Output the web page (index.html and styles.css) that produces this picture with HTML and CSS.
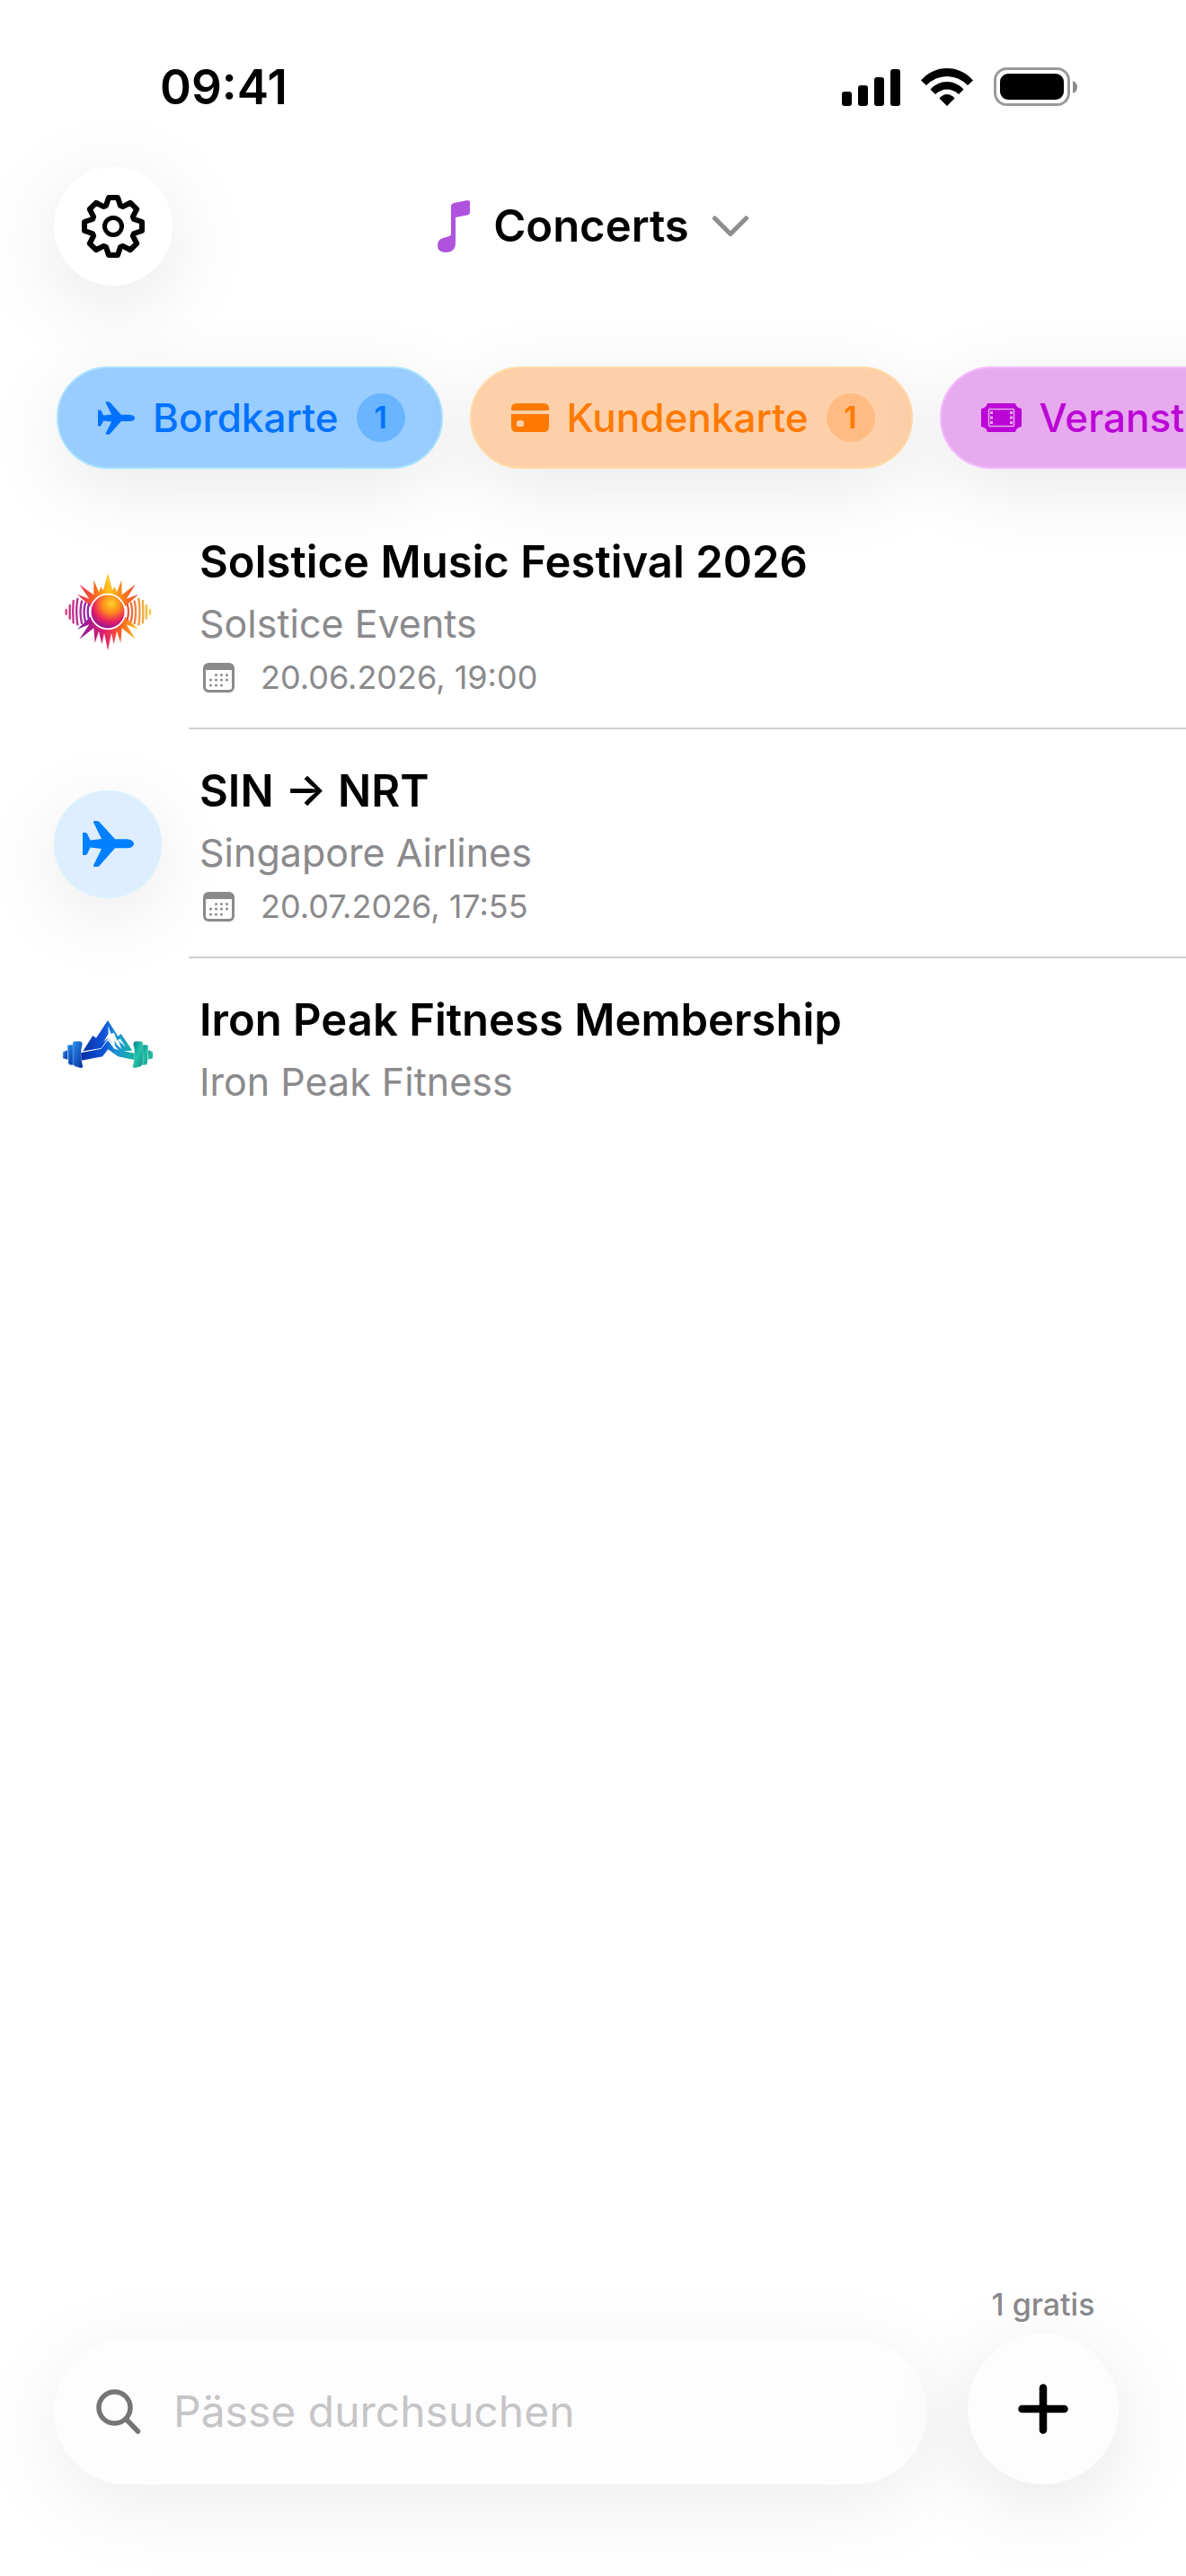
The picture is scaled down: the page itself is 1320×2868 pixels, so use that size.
FILE: index.html
```html
<!DOCTYPE html>
<html lang="de">
<head>
	<meta charset="UTF-8">
	<meta name="viewport" content="width=device-width, initial-scale=1">
	<title>Concerts</title>
	<link rel="stylesheet" href="styles.css">
</head>
<body>
	<!-- shared symbols -->
	<svg class="defs" aria-hidden="true">
		<symbol id="plane" viewBox="0 0 57 51">
			<path fill="currentColor" d="M0 13H3Q4 13 5 14L8.500 21.500 21 20 12 1.500Q12 0 13 0H16Q18 0 19 1.500L36 20.300H49C54 20.500 57 23 57 25.500S54 30.300 49 30.300H36L19 49.500Q18 51 16 51H13Q12 51 12 49.500L21 31 8.500 29.500 5 37Q4 38 3 38H0Z"/>
		</symbol>
		<symbol id="calendar" viewBox="0 0 35 33">
			<rect x="1.500" y="1.500" width="32" height="30" rx="4.500" fill="none" stroke="currentColor" stroke-width="3"/>
			<path fill="currentColor" d="M1 8V5Q1 1 5 1H30Q34 1 34 5V8Z"/>
			<g fill="currentColor">
				<circle cx="14.500" cy="13.500" r="1.500"/><circle cx="20.500" cy="13.500" r="1.500"/><circle cx="26.500" cy="13.500" r="1.500"/>
				<circle cx="8.500" cy="19" r="1.500"/><circle cx="14.500" cy="19" r="1.500"/><circle cx="20.500" cy="19" r="1.500"/><circle cx="26.500" cy="19" r="1.500"/>
				<circle cx="8.500" cy="25" r="1.500"/><circle cx="14.500" cy="25" r="1.500"/><circle cx="20.500" cy="25" r="1.500"/>
			</g>
		</symbol>
	</svg>

	<div class="status">
		<span class="time">09:41</span>
		<div class="status-icons">
			<svg width="65" height="42" viewBox="0 0 65 42">
				<rect x="0" y="26" width="11" height="16" rx="3"/>
				<rect x="18" y="19" width="11" height="23" rx="3"/>
				<rect x="36" y="10" width="11" height="32" rx="3"/>
				<rect x="54" y="1" width="11" height="41" rx="3"/>
			</svg>
			<svg width="58" height="42" viewBox="0 0 58 42">
				<path d="M0 13.500Q12 0 29 0T58 13.500L52 19Q42 9 29 9T6 19Z"/>
				<path d="M10.500 23.500Q18 15 29 15T47.500 23.500L42 29Q36 23.500 29 23.500T16 29Z"/>
				<path d="M20.500 33.500Q24 29 29 29T37.500 33.500L29 42Z"/>
			</svg>
			<svg width="94" height="44" viewBox="0 0 94 44">
				<rect x="1.500" y="1.500" width="82" height="40" rx="13" fill="none" stroke="#999" stroke-width="3"/>
				<rect x="7" y="7" width="71" height="29" rx="9"/>
				<path d="M88 15Q93 17 93 22T88 29Z" fill="#8c8c8c"/>
			</svg>
		</div>
	</div>

	<header class="nav">
		<button class="round settings" type="button" aria-label="Einstellungen">
			<svg width="70" height="70" viewBox="-35 -35 70 70" fill="none" stroke="#000" stroke-width="6" stroke-linejoin="round">
				<path d="M-5-32H5L8-23 10.600-21.900 19.100-26.200 26.200-19.100 21.900-10.600 23-8 32-5V5L23 8 21.900 10.600 26.200 19.100 19.100 26.200 10.600 21.900 8 23 5 32H-5L-8 23-10.600 21.900-19.100 26.200-26.200 19.100-21.900 10.600-23 8-32 5V-5L-23-8-21.900-10.600-26.200-19.100-19.100-26.200-10.600-21.900-8-23Z"/>
				<circle r="9.500" stroke-width="5"/>
			</svg>
		</button>
		<button class="title" type="button">
			<svg width="36" height="58" viewBox="0 0 36 58">
				<path fill="#af52de" d="M15 7Q15 4 18 3L33 0Q36 0 36 2V13Q36 16 33 16.500L20 19V47Q20 58 9 58 0 58 0 50 0 44 6 42L13 40Q15 39 15 37Z"/>
			</svg>
			<span>Concerts</span>
			<svg width="40" height="24" viewBox="0 0 40 24">
				<path d="M2.500 3L20 20.500 37.500 3" fill="none" stroke="#8e8e8e" stroke-width="5" stroke-linecap="round" stroke-linejoin="round"/>
			</svg>
		</button>
	</header>

	<nav class="chips">
		<button class="chip blue" type="button">
			<svg width="41" height="37"><use href="#plane"/></svg>
			<span>Bordkarte</span>
			<span class="badge">1</span>
		</button>
		<button class="chip orange" type="button">
			<svg width="42" height="32" viewBox="0 0 42 32" fill="currentColor">
				<path d="M0 8V6Q0 0 6 0H36Q42 0 42 6V8Z"/>
				<path fill-rule="evenodd" d="M0 12H42V26Q42 32 36 32H6Q0 32 0 26ZM8 19Q6 19 6 21V24Q6 26 8 26H12Q14 26 14 24V21Q14 19 12 19Z"/>
			</svg>
			<span>Kundenkarte</span>
			<span class="badge">1</span>
		</button>
		<button class="chip purple" type="button">
			<svg width="45" height="32" viewBox="0 0 45 32">
				<path fill="currentColor" d="M7 0H38Q39 5 45 6V26Q39 27 38 32H7Q6 27 0 26V6Q6 5 7 0Z"/>
				<rect x="8.500" y="6.500" width="28" height="19" rx="1" fill="none" stroke="#e8aaef" stroke-width="1.500"/>
				<path d="M11.500 9V24M33.500 9V24" stroke="#e8aaef" stroke-width="3" stroke-dasharray="3 2.500" fill="none"/>
			</svg>
			<span>Veranstaltung</span>
		</button>
	</nav>

	<main>
		<ul class="list">
			<li class="row">
				<div class="logo">
					<svg width="120" height="100" viewBox="0 0 360 300">
						<defs>
							<linearGradient id="rayTop" gradientUnits="userSpaceOnUse" x1="80" y1="100" x2="280" y2="80">
								<stop offset="0" stop-color="#e8265c"/><stop offset=".3" stop-color="#fb6a1c"/><stop offset=".52" stop-color="#ffc81e"/><stop offset=".75" stop-color="#fc7d1c"/><stop offset="1" stop-color="#f0402c"/>
							</linearGradient>
							<linearGradient id="rayBottom" gradientUnits="userSpaceOnUse" x1="80" y1="220" x2="280" y2="220">
								<stop offset="0" stop-color="#7d1a9c"/><stop offset=".45" stop-color="#e31e6c"/><stop offset=".75" stop-color="#fb6a1c"/><stop offset="1" stop-color="#ffc81e"/>
							</linearGradient>
							<linearGradient id="wave" gradientUnits="userSpaceOnUse" x1="38" y1="120" x2="324" y2="120">
								<stop offset="0" stop-color="#e0357c"/><stop offset=".28" stop-color="#8a24b0"/><stop offset=".7" stop-color="#f04c3c"/><stop offset="1" stop-color="#f7d23c"/>
							</linearGradient>
							<radialGradient id="ball" cx=".6" cy=".27" r=".75">
								<stop offset="0" stop-color="#ffd42a"/><stop offset=".35" stop-color="#fd8a1c"/><stop offset=".7" stop-color="#e81e62"/><stop offset="1" stop-color="#84189c"/>
							</radialGradient>
						</defs>
						<path fill="url(#rayTop)" d="M122 135L78 95 118 110 85 62 133 97 133 47 150 88 157 70 165 82 180 25 195 82 203 70 210 88 226 47 227 97 272 62 242 110 282 95 238 135Z"/>
						<path fill="url(#rayBottom)" d="M122 170L78 212 118 196 85 245 133 208 137 258 150 218 160 262 168 224 180 283 192 224 200 262 210 218 223 258 227 208 272 245 242 196 282 212 238 170Z"/>
						<path fill="none" stroke="url(#wave)" stroke-width="7" stroke-linecap="round" d="M41 147V161M53 132V176M65 117Q62 154 65 190M79 110Q72 152 79 196M93 118Q84 152 93 192M105 124Q96 152 105 186M117 128Q109 152 117 180M321 147V161M309 132V176M297 117Q300 154 297 190M283 110Q290 152 283 196M269 118Q278 152 269 192M257 124Q266 152 257 186M245 128Q253 152 245 180"/>
						<circle cx="180" cy="153" r="58" fill="url(#ball)" stroke="#fff" stroke-width="5"/>
					</svg>
				</div>
				<div class="info">
					<h2>Solstice Music Festival 2026</h2>
					<p class="org">Solstice Events</p>
					<p class="date"><svg width="35" height="33"><use href="#calendar"/></svg>20.06.2026, 19:00</p>
				</div>
			</li>
			<li class="row">
				<div class="logo circle">
					<svg width="57" height="51"><use href="#plane"/></svg>
				</div>
				<div class="info">
					<h2>SIN → NRT</h2>
					<p class="org">Singapore Airlines</p>
					<p class="date"><svg width="35" height="33"><use href="#calendar"/></svg>20.07.2026, 17:55</p>
				</div>
			</li>
			<li class="row">
				<div class="logo">
					<svg width="120" height="80" viewBox="0 0 360 240">
						<defs>
							<linearGradient id="peak" gradientUnits="userSpaceOnUse" x1="95" y1="120" x2="265" y2="120">
								<stop offset="0" stop-color="#0a2fa8"/><stop offset=".45" stop-color="#0f56dc"/><stop offset=".65" stop-color="#1a90d8"/><stop offset="1" stop-color="#16b3a2"/>
							</linearGradient>
							<linearGradient id="plateL" x1="0" y1="0" x2="1" y2="1">
								<stop offset="0" stop-color="#2a93ee"/><stop offset="1" stop-color="#082a9c"/>
							</linearGradient>
							<linearGradient id="plateR" x1="0" y1="0" x2="1" y2="1">
								<stop offset="0" stop-color="#0d7898"/><stop offset=".5" stop-color="#22c4a4"/><stop offset="1" stop-color="#128a90"/>
							</linearGradient>
						</defs>
						<path fill="url(#peak)" d="M97 142L130 90 141 98 180 39 214 92 224 84 262 140 220 142 180 100 158 132Z"/>
						<path fill="#fff" d="M181 58L191 84 200 80 212 107 221 100 240 128 216 107 226 136 210 120 202 106 204 126 180 98 166 110 182 84Z"/>
						<path fill="url(#peak)" d="M88 148L158 134 180 106 202 134 272 150V172L214 160 181 136 162 160 88 174Z"/>
						<g fill="url(#plateL)" stroke="#cfe6ff" stroke-width="1">
							<path d="M30 144L46 138V170L30 166Z"/>
							<path d="M45 125Q46 121 52 121H66V188H56Q50 188 48 182Z"/>
							<path d="M63 113Q65 109 72 109H88Q98 112 94 124 86 152 97 194 96 199 88 198L70 193Q62 188 63 180Z"/>
						</g>
						<g fill="url(#plateR)" stroke="#cffff2" stroke-width="1">
							<path d="M330 144L314 138V170L330 166Z"/>
							<path d="M315 125Q314 121 308 121H294V188H304Q310 188 312 182Z"/>
							<path d="M297 113Q295 109 288 109H272Q262 112 266 124 274 152 263 194 264 199 272 198L290 193Q298 188 297 180Z"/>
						</g>
					</svg>
				</div>
				<div class="info">
					<h2>Iron Peak Fitness Membership</h2>
					<p class="org">Iron Peak Fitness</p>
				</div>
			</li>
		</ul>
	</main>

	<footer class="bottom">
		<label class="search">
			<svg width="50" height="50" viewBox="0 0 50 50" fill="none" stroke="#757575" stroke-width="5.500" stroke-linecap="round">
				<circle cx="20.500" cy="20.500" r="17.500"/>
				<path d="M33.500 33.500L46.500 47"/>
			</svg>
			<input type="search" placeholder="Pässe durchsuchen" aria-label="Pässe durchsuchen">
		</label>
		<div class="add">
			<span>1 gratis</span>
			<button class="round plus" type="button" aria-label="Pass hinzufügen">
				<svg width="56" height="56" viewBox="0 0 56 56">
					<path d="M28 4.500V51.500M4.500 28H51.500" stroke="#000" stroke-width="8.500" stroke-linecap="round"/>
				</svg>
			</button>
		</div>
	</footer>
</body>
</html>
```
FILE: styles.css
```css
* {box-sizing: border-box;}
body {margin: 0;min-height: 100vh;display: flex;flex-direction: column;background: #fff;color: #000;font-family: Inter, "Liberation Sans", sans-serif;overflow-x: hidden;}
h2, p, ul {margin: 0;padding: 0;}
li {list-style: none;}
svg {display: block;flex-shrink: 0;}
button {border: 0;padding: 0;background: none;color: inherit;font-family: inherit;cursor: pointer;}
.defs {position: absolute;width: 0;height: 0;}

.status {display: flex;justify-content: space-between;align-items: center;padding: 64px 120px 0 178px;}
.time {font-size: 53px;line-height: 66px;font-weight: 600;}
.status-icons {display: flex;align-items: center;gap: 23px;}

.nav {display: grid;grid-template-columns: 1fr auto 1fr;align-items: center;padding: 56px 60px 0;}
.round {display: flex;align-items: center;justify-content: center;border-radius: 50%;background: #fff;box-shadow: 0 20px 96px rgba(0,0,0,.1);}
.settings {width: 132px;height: 132px;}
.title {display: flex;align-items: center;gap: 26px;font-size: 49px;line-height: 60px;font-weight: 600;}

.chips {display: flex;gap: 30px;padding: 90px 63px 110px;margin-bottom: -75px;overflow: hidden;}
.chip {display: flex;align-items: center;flex-shrink: 0;gap: 20px;height: 114px;padding: 0 40px 0 44px;border: 2px solid;border-radius: 57px;font-size: 44px;font-weight: 500;box-shadow: 0 20px 88px rgba(0,0,0,.09);}
.badge {width: 54px;height: 54px;border-radius: 50%;font-size: 34px;line-height: 54px;font-weight: 600;text-align: center;}
.blue {background: #99ccff;border-color: #a8e2ff;color: #0072ff;}
.blue .badge {background: #69b5ff;}
.orange {background: #fed0a9;border-color: #ffdba6;color: #ff7a00;}
.orange .badge {background: #ffbb82;}
.purple {background: #e8aaef;border-color: #f3bbff;color: #bb05d6;}

main {flex: 1;}
.row {display: flex;padding-left: 60px;}
.logo {display: flex;align-items: center;justify-content: center;width: 120px;padding-bottom: 10px;flex-shrink: 0;}
.circle {height: 120px;padding: 0;align-self: center;border: 2px solid #d9f1ff;border-radius: 50%;background: #deeeff;color: #0080ff;box-shadow: 0 20px 88px rgba(0,0,0,.09);}
.info {flex: 1;margin-left: 30px;padding: 36px 12px 30px;border-bottom: 2px solid #d0d0d2;}
.row:last-child .info {border-bottom: 0;}
.info h2 {font-size: 49px;line-height: 66px;font-weight: 600;}
.org {font-size: 43px;line-height: 70px;color: #8a8a8c;}
.date {display: flex;align-items: center;gap: 29px;font-size: 36px;line-height: 51px;color: #8a8a8c;}
.date svg {margin-left: 4px;}

.bottom {display: flex;align-items: flex-end;gap: 45px;padding: 0 75px 102px 60px;}
.search {flex: 1;display: flex;align-items: center;gap: 36px;height: 162px;padding: 0 47px;border-radius: 81px;background: #fdfdfd;box-shadow: 0 20px 96px rgba(0,0,0,.08);}
.search input {flex: 1;min-width: 0;padding: 0;border: 0;outline: 0;background: none;appearance: none;font-family: inherit;font-size: 48px;line-height: 60px;color: #000;}
.search input::placeholder {color: #c5c5c7;opacity: 1;}
.add {display: flex;flex-direction: column;align-items: center;gap: 10px;font-size: 34px;line-height: 44px;font-weight: 500;color: #8a8a8c;}
.plus {width: 168px;height: 168px;background: #fdfdfd;}
```
